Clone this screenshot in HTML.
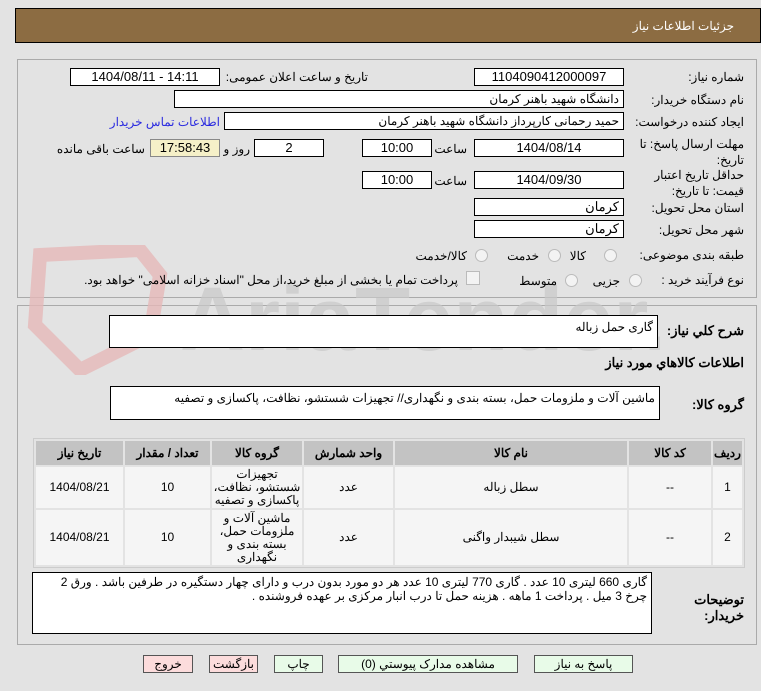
<!DOCTYPE html>
<html><head><meta charset="utf-8"><style>
body{margin:0;width:761px;height:691px;background:#e3e3e3;font-family:Tahoma,"Liberation Sans","Noto Sans CJK SC",sans-serif;font-size:12px;color:#000;position:relative;overflow:hidden}
.a{position:absolute}
.in{position:absolute;background:#fff;border:1px solid #000;box-sizing:border-box;height:18px;text-align:center;line-height:16px;font-size:13px}
.l{position:absolute;direction:rtl;text-align:right;white-space:nowrap}
.b{font-weight:bold;font-size:13px}
.ta{position:absolute;background:#fff;border:1px solid #000;box-sizing:border-box;direction:rtl;text-align:right;padding:2px 4px;font-size:12px;line-height:19px}
.rad{position:absolute;width:11px;height:11px;border-radius:50%;border:1px solid #bbb;background:#f3f3f3}
table{border-collapse:separate;border-spacing:2px;position:absolute;left:33px;top:438px;width:712px;background:#e3e3e3;border:1px solid #ccc}
td,th{text-align:center;direction:rtl;font-size:12px;line-height:13px}
th{background:#c3c3c3;height:22px;font-weight:bold}
td{background:#f5f5f5}
.btn{position:absolute;top:655px;height:18px;border:1px solid #555;box-sizing:border-box;text-align:center;line-height:16px;font-size:12px;direction:rtl}
</style></head><body>
<div class="a" style="left:15px;top:8px;width:746px;height:35px;background:#8c6c42;border:1px solid #000;box-sizing:border-box"></div>
<div class="l" style="right:27px;top:19px;color:#fff;font-size:12px">جزئیات اطلاعات نیاز</div>
<div class="a" style="left:17px;top:59px;width:740px;height:239px;border:1px solid #aaa;box-sizing:border-box"></div>
<div class="a" style="left:17px;top:305px;width:740px;height:340px;border:1px solid #aaa;box-sizing:border-box"></div>
<!-- watermark -->
<svg class="a" style="left:20px;top:245px" width="640" height="130"><path d="M20 10 L120 5 L140 30 L130 90 L60 125 L15 80 Z" fill="none" stroke="#e5b8b8" stroke-width="14" opacity=".8"/><text x="160" y="105" font-size="90" font-family="Liberation Sans" font-weight="bold" fill="#c8c8c8" opacity=".7">AriaTender.net</text></svg>
<div class="l" style="right:17px;top:70px">شماره نیاز:</div>
<div class="in" style="left:474px;top:68px;width:150px">1104090412000097</div>
<div class="l" style="right:393px;top:70px">تاریخ و ساعت اعلان عمومی:</div>
<div class="in" style="left:70px;top:68px;width:150px">1404/08/11 - 14:11</div>
<div class="l" style="right:17px;top:93px">نام دستگاه خریدار:</div>
<div class="in" style="left:174px;top:90px;width:450px;text-align:right;padding-right:4px;direction:rtl;font-size:12px">دانشگاه شهید باهنر کرمان</div>
<div class="l" style="right:17px;top:115px">ایجاد کننده درخواست:</div>
<div class="in" style="left:224px;top:112px;width:400px;text-align:right;padding-right:4px;direction:rtl;font-size:12px">حمید  رحمانی کارپرداز دانشگاه شهید باهنر کرمان</div>
<div class="l" style="right:541px;top:115px;color:#2a2ae0">اطلاعات تماس خریدار</div>
<div class="l" style="right:17px;top:136px;line-height:16px">مهلت ارسال پاسخ: تا<br>تاریخ:</div>
<div class="in" style="left:474px;top:139px;width:150px">1404/08/14</div>
<div class="l" style="right:294px;top:142px">ساعت</div>
<div class="in" style="left:362px;top:139px;width:70px">10:00</div>
<div class="in" style="left:254px;top:139px;width:70px">2</div>
<div class="l" style="right:511px;top:142px">روز و</div>
<div class="in" style="left:150px;top:139px;width:70px;background:#f5f0c8;border-color:#888">17:58:43</div>
<div class="l" style="right:616px;top:142px">ساعت باقی مانده</div>
<div class="l" style="right:17px;top:167px;line-height:16px">حداقل تاریخ اعتبار<br>قیمت: تا تاریخ:</div>
<div class="in" style="left:474px;top:171px;width:150px">1404/09/30</div>
<div class="l" style="right:294px;top:174px">ساعت</div>
<div class="in" style="left:362px;top:171px;width:70px">10:00</div>
<div class="l" style="right:17px;top:201px">استان محل تحویل:</div>
<div class="in" style="left:474px;top:198px;width:150px;text-align:right;padding-right:4px">کرمان</div>
<div class="l" style="right:17px;top:223px">شهر محل تحویل:</div>
<div class="in" style="left:474px;top:220px;width:150px;text-align:right;padding-right:4px">کرمان</div>
<div class="l" style="right:17px;top:248px">طبقه بندی موضوعی:</div>
<div class="rad" style="left:604px;top:249px"></div><div class="l" style="right:175px;top:249px">کالا</div>
<div class="rad" style="left:548px;top:249px"></div><div class="l" style="right:222px;top:249px">خدمت</div>
<div class="rad" style="left:475px;top:249px"></div><div class="l" style="right:294px;top:249px">کالا/خدمت</div>
<div class="l" style="right:17px;top:273px">نوع فرآیند خرید :</div>
<div class="rad" style="left:629px;top:274px"></div><div class="l" style="right:141px;top:274px">جزیی</div>
<div class="rad" style="left:565px;top:274px"></div><div class="l" style="right:204px;top:274px">متوسط</div>
<div class="a" style="left:466px;top:271px;width:12px;height:12px;border:1px solid #bbb;background:#f3f3f3"></div>
<div class="l" style="right:303px;top:273px">پرداخت تمام یا بخشی از مبلغ خرید،از محل "اسناد خزانه اسلامی" خواهد بود.</div>
<div class="ta" style="left:109px;top:315px;width:549px;height:33px">گاری حمل زباله</div>
<div class="l b" style="right:17px;top:323px">شرح کلي نياز:</div>
<div class="l b" style="right:17px;top:355px">اطلاعات کالاهاي مورد نياز</div>
<div class="ta" style="left:110px;top:386px;width:550px;height:34px">ماشین آلات و ملزومات حمل، بسته بندی و نگهداری// تجهیزات شستشو، نظافت، پاکسازی و تصفیه</div>
<div class="l b" style="right:17px;top:397px">گروه کالا:</div>
<table>
<tr><th style="width:85px">تاریخ نیاز</th><th style="width:83px">تعداد / مقدار</th><th style="width:88px">گروه کالا</th><th style="width:87px">واحد شمارش</th><th>نام کالا</th><th style="width:80px">کد کالا</th><th style="width:27px">ردیف</th></tr>
<tr style="height:41px"><td>1404/08/21</td><td>10</td><td>تجهیزات شستشو، نظافت، پاکسازی و تصفیه</td><td>عدد</td><td>سطل زباله</td><td>--</td><td>1</td></tr>
<tr style="height:55px"><td>1404/08/21</td><td>10</td><td>ماشین آلات و ملزومات حمل، بسته بندی و نگهداری</td><td>عدد</td><td>سطل شیبدار واگنی</td><td>--</td><td>2</td></tr>
</table>
<div class="ta" style="left:32px;top:572px;width:620px;height:62px;line-height:14px">گاری 660 لیتری 10 عدد . گاری 770 لیتری 10 عدد هر دو مورد بدون درب و دارای چهار دستگیره در طرفین باشد . ورق 2 چرخ 3 میل . پرداخت 1 ماهه . هزینه حمل تا درب انبار مرکزی بر عهده فروشنده .</div>
<div class="l b" style="right:17px;top:592px;line-height:16px">توضیحات<br>خریدار:</div>
<div class="btn" style="left:534px;width:99px;background:#e8fbe8">پاسخ به نیاز</div>
<div class="btn" style="left:338px;width:180px;background:#e8fbe8">مشاهده مدارک پیوستي (0)</div>
<div class="btn" style="left:274px;width:49px;background:#e8fbe8">چاپ</div>
<div class="btn" style="left:209px;width:49px;background:#fcdcdc">بازگشت</div>
<div class="btn" style="left:143px;width:50px;background:#fcdcdc">خروج</div>
</body></html>
